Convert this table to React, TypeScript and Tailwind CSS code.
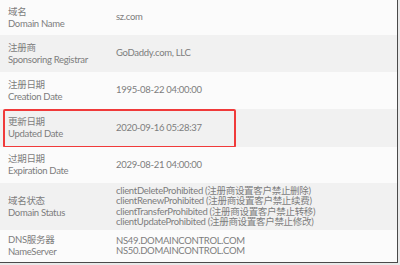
import { FC } from "react";

type Row = {
    zh: string;
    en: string;
    values: string[];
    h: string;
    gray: boolean;
    marked?: boolean;
};

const rows: Row[] = [
    { zh: "域名", en: "Domain Name", values: ["sz.com"], h: "h-[35px]", gray: false },
    { zh: "注册商", en: "Sponsoring Registrar", values: ["GoDaddy.com, LLC"], h: "h-[37px]", gray: true },
    { zh: "注册日期", en: "Creation Date", values: ["1995-08-22 04:00:00"], h: "h-[37px]", gray: false },
    { zh: "更新日期", en: "Updated Date", values: ["2020-09-16 05:28:37"], h: "h-[38px]", gray: true, marked: true },
    { zh: "过期日期", en: "Expiration Date", values: ["2029-08-21 04:00:00"], h: "h-[36px]", gray: false },
    {
        zh: "域名状态",
        en: "Domain Status",
        values: [
            "clientDeleteProhibited (注册商设置客户禁止删除)",
            "clientRenewProhibited (注册商设置客户禁止续费)",
            "clientTransferProhibited (注册商设置客户禁止转移)",
            "clientUpdateProhibited (注册商设置客户禁止修改)",
        ],
        h: "h-[47px]",
        gray: true,
    },
    { zh: "DNS服务器", en: "NameServer", values: ["NS49.DOMAINCONTROL.COM", "NS50.DOMAINCONTROL.COM"], h: "h-[32px]", gray: false },
];

const App: FC = () => {
    return (
        <div className="w-[400px] h-[265px] bg-[#e9e9e9] font-['Lato','Noto_Sans_CJK_SC',sans-serif] text-[9.5px] tracking-[-0.3px] text-[#7d7d7d]">
            <div className="w-[398px] h-[263px] border-r border-b border-[#4a4a4a] bg-[#fbfbfb]">
                {rows.map((row) => (
                    <div key={row.en} className={`relative flex items-center ${row.h} ${row.gray ? "bg-[#f1f1f1]" : "bg-[#fbfbfb]"}`}>
                        <div className="w-[116px] pl-2 leading-[12px]">
                            <div>{row.zh}</div>
                            <div>{row.en}</div>
                        </div>
                        <div className="leading-[10.5px]">
                            {row.values.map((v) => (
                                <div key={v}>{v}</div>
                            ))}
                        </div>
                        {row.marked && (
                            <div className="absolute left-[3px] top-0 bottom-[-1px] w-[233px] border-2 border-[#f03a3a] rounded-[2px]" />
                        )}
                    </div>
                ))}
            </div>
        </div>
    );
};

export default App;
